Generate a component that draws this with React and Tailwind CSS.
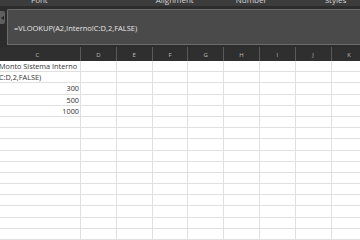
import React from 'react';

const cols = ['D', 'E', 'F', 'G', 'H', 'I', 'J', 'K'];

const rows = [
  { text: 'Monto Sistema Interno', align: 'left' },
  { text: 'C:D,2,FALSE)', align: 'left' },
  { text: '300', align: 'right' },
  { text: '500', align: 'right' },
  { text: '1000', align: 'right' },
  ...Array(11).fill({ text: '', align: 'left' }),
];

export default function App() {
  return (
    <div
      className="w-[360px] h-[240px] overflow-hidden bg-white"
      style={{ fontFamily: '"Open Sans", "Liberation Sans", sans-serif' }}
    >
      {/* Ribbon group labels, cut at the top */}
      <div className="h-[6px] overflow-hidden bg-[#3c3c3c] relative text-[8px] leading-[10px] text-[#d8d8d8]">
        <div className="flex -mt-[5px]">
          <span className="ml-[31px]">Font</span>
          <span className="ml-[108px]">Alignment</span>
          <span className="ml-[42px]">Number</span>
          <span className="ml-[58px]">Styles</span>
        </div>
      </div>

      {/* Formula bar */}
      <div className="bg-[#2c2c2c] pt-[3px] pb-[2px] flex">
        <div className="w-[6px] flex flex-col">
          <div className="mt-[2px] h-[13px] w-[5px] rounded-r-[2px] bg-[#5e5e5e] flex items-center justify-end pr-[1px]">
            <div className="w-0 h-0 border-y-[2px] border-y-transparent border-r-[3px] border-r-[#222]" />
          </div>
        </div>
        <div className="ml-[1px] flex-1 h-[36px] rounded-tl-[2px] border border-r-0 border-[#6c6c6c] bg-[#4a4a4a] pl-[6px] pt-[3px]">
          <span className="text-[7.5px] leading-[12px] text-[#e6e6e6]">=VLOOKUP(A2,Interno!C:D,2,FALSE)</span>
        </div>
      </div>

      {/* Column headers */}
      <div className="flex h-[14px] bg-[#2f2f2f] text-[6px] text-[#bdbdbd] -ml-[5px]">
        <div className="w-[86px] shrink-0 flex items-center justify-center border-r border-[#5a5a5a] pt-[2px]">C</div>
        {cols.map((c) => (
          <div key={c} className="w-[35.8px] shrink-0 flex items-center justify-center border-r border-[#5a5a5a] pt-[2px]">
            {c}
          </div>
        ))}
      </div>

      {/* Grid */}
      <div className="-ml-[5px]">
        {rows.map((r, i) => (
          <div key={i} className="flex h-[11.2px] border-b border-[#e0e0e0]">
            <div
              className={`w-[86px] shrink-0 border-r border-[#e0e0e0] text-[7.3px] leading-[11px] text-[#333] whitespace-nowrap overflow-visible ${
                r.align === 'right' ? 'text-right pr-[1px]' : 'text-left pl-[4px]'
              }`}
            >
              {r.text}
            </div>
            {cols.map((c) => (
              <div key={c} className="w-[35.8px] shrink-0 border-r border-[#e0e0e0]" />
            ))}
          </div>
        ))}
      </div>
    </div>
  );
}
